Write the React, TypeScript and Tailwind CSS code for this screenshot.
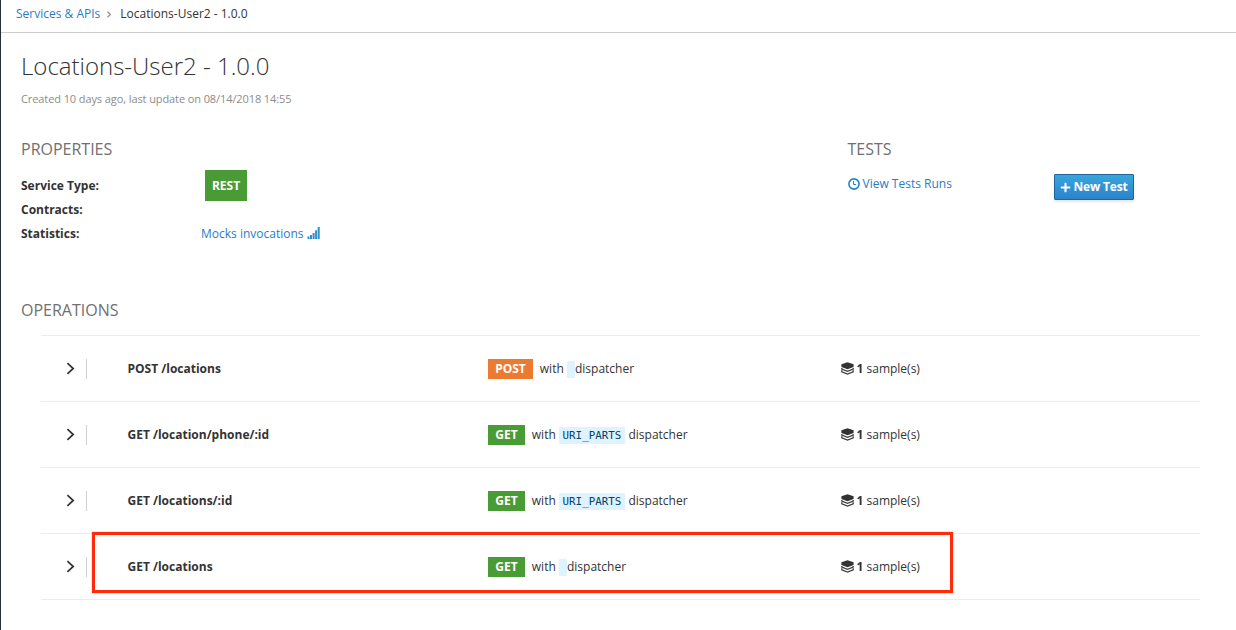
import { FaPlus } from "react-icons/fa";

type Operation = { name: string; method: "GET" | "POST"; dispatcher?: string; highlighted?: boolean };

const operations: Operation[] = [
  { name: "POST /locations", method: "POST" },
  { name: "GET /location/phone/:id", method: "GET", dispatcher: "URI_PARTS" },
  { name: "GET /locations/:id", method: "GET", dispatcher: "URI_PARTS" },
  { name: "GET /locations", method: "GET", highlighted: true },
];

function SignalIcon() {
  return (
    <svg className="-mt-px -ml-px" width="13" height="12" viewBox="0 0 13 12" fill="#2f8ecb">
      <path d="M.5 9.500h2V12h-2zM3 8h2v4H3zM5.600 6h2v6h-2zM8.100 3.200h2V12h-2zM10.700 0h2v12h-2z" />
    </svg>
  );
}

function ClockIcon() {
  return (
    <svg className="-mt-px" width="12" height="12" viewBox="0 0 12 12" fill="none" stroke="#2085c7">
      <circle cx="6" cy="6" r="5.100" strokeWidth="1.600" />
      <path d="M5.500 3v3.500H8.200" strokeWidth="1" />
    </svg>
  );
}

function LayersIcon() {
  return (
    <svg className="-mt-px" width="13" height="13" viewBox="0 0 13 13">
      <path d="M6.500.3 12.600 2.200v2.800L6.500 7.200.4 5V2.200z" fill="#333" />
      <path d="M.8 5.900v1.200l5.700 2.200 5.700-2.200V5.900M.8 8.300v1.500l5.700 2.200 5.700-2.200V8.300" fill="none" stroke="#3d3d3d" strokeWidth="1.300" />
    </svg>
  );
}

function OperationRow({ op }: { op: Operation }) {
  return (
    <div className="relative flex h-[66px] items-center border-b border-[#ececec]">
      <div className="mt-px flex h-5 w-[46px] shrink-0 items-center justify-end border-r border-[#cfcfcf] pr-[11px]">
        <svg className="mb-0.5" width="9" height="13" viewBox="0 0 9 13" fill="none" stroke="#333" strokeWidth="1.700">
          <path d="M1.400 1.200 7.200 6.500 1.400 11.800" />
        </svg>
      </div>
      <div className="ml-[40.500px] w-[360.500px] shrink-0 font-bold">{op.name}</div>
      <div className="flex w-[353px] shrink-0 items-center">
        <span
          className={
            op.method === "POST"
              ? "flex h-5 w-[45px] items-center justify-center bg-[#ec7a30] font-bold text-white"
              : "flex h-5 w-[37px] items-center justify-center bg-[#489b35] font-bold text-white"
          }
        >
          {op.method}
        </span>
        <span className="ml-[6.800px]">with</span>
        {op.dispatcher ? (
          <code className="mt-0.5 mr-[3.500px] ml-[3.200px] flex h-[17px] w-[66px] items-center justify-center rounded-[1px] bg-[#def3ff] font-['DejaVu_Sans_Mono',monospace] text-[10.800px] tracking-[0.03px] text-[#004368]">
            {op.dispatcher}
          </code>
        ) : (
          <code className="mt-0.5 ml-[3.200px] h-[17px] w-2 rounded-[1px] bg-[#def3ff]" />
        )}
        <span>dispatcher</span>
      </div>
      <div className="flex items-center">
        <LayersIcon />
        <span className="ml-[2.500px]"><strong>1</strong> sample(s)</span>
      </div>
      {op.highlighted && (
        <div className="absolute top-[-2px] left-[51px] h-[61px] w-[861px] border-3 border-[#ff2c0c] shadow-[0_0_1px_#ff7760]" />
      )}
    </div>
  );
}

export default function App() {
  return (
    <div className="h-[630px] overflow-hidden border-l border-[#292e34] bg-white font-['Open_Sans',sans-serif] text-[12px] leading-5 text-[#333]">
      <nav className="flex h-[33px] items-center border-b border-[#ccc] pb-[5px] pl-[15px]">
        <a className="text-[#2a7cc7]">Services &amp; APIs</a>
        <svg className="mt-px mr-2 ml-[6px]" width="6" height="7" viewBox="0 0 6 7" fill="none" stroke="#999" strokeWidth="1.400">
          <path d="M1.500.7 4.300 3.500 1.500 6.300" />
        </svg>
        <span>Locations-User2 - 1.0.0</span>
      </nav>
      <header className="h-[107px] pt-[17px] pl-5">
        <h1 className="text-[24px] leading-8 font-light">Locations-User2 - 1.0.0</h1>
        <p className="mt-[7px] text-[11px] tracking-[-0.095px] text-[#8c8c8c]">Created 10 days ago, last update on 08/14/2018 14:55</p>
      </header>
      <div className="flex h-[161px] pl-5">
        <section className="w-[826.500px]">
          <h2 className="text-[16px] leading-[18px] text-[#707070]">PROPERTIES</h2>
          <dl className="mt-3 grid grid-cols-[180px_auto] grid-rows-[31px_17px_31px] items-center justify-start font-normal">
            <dt className="font-bold">Service Type:</dt>
            <dd className="ml-1 flex h-[31px] w-[42px] items-center justify-center bg-[#489b35] font-bold text-white">REST</dd>
            <dt className="font-bold">Contracts:</dt>
            <dd />
            <dt className="font-bold">Statistics:</dt>
            <dd className="flex items-center gap-1 text-[#2a7cc7]">Mocks invocations <SignalIcon /></dd>
          </dl>
        </section>
        <section>
          <h2 className="text-[16px] leading-[18px] text-[#707070]">TESTS</h2>
          <div className="mt-4 flex items-start">
            <a className="flex w-[206.500px] items-center gap-[3px] text-[#2a7cc7]"><ClockIcon />View Tests Runs</a>
            <button className="flex h-[26px] w-20 items-center justify-center gap-0.5 rounded-[1px] border border-[#20669b] bg-linear-to-b from-[#39a5dc] to-[#2b83ca] font-bold tracking-[-0.15px] text-white shadow-[0_2px_3px_rgba(3,3,3,0.1)]">
              <FaPlus size={11} />New Test
            </button>
          </div>
        </section>
      </div>
      <section>
        <h2 className="pl-5 text-[16px] leading-[18px] text-[#707070]">OPERATIONS</h2>
        <div className="mt-4 mr-9 ml-10 border-t border-[#ececec]">
          {operations.map((op) => <OperationRow key={op.name} op={op} />)}
        </div>
      </section>
    </div>
  );
}
